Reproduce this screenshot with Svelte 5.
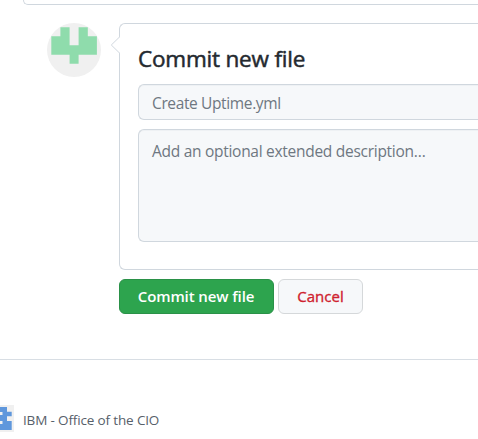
<script>
  let summary = $state('');
  let description = $state('');
</script>

<main>
  <div class="editor-edge"></div>

  <form class="commit" onsubmit={(e) => e.preventDefault()}>
    <svg class="avatar" width="54" height="54" viewBox="0 0 54 54" aria-hidden="true">
      <circle cx="27" cy="27" r="27" fill="#f0f0f0" />
      <path fill="#8fdcac" d="M4.3 13.3h9.1V4.3h9.2v18h9V4.3h9.2v9h9.1v18.4H31.6v9.1h-9v-9.1H4.3z" />
    </svg>
    <div class="column">
      <section class="box">
        <svg class="caret" width="10" height="18" viewBox="0 0 10 18" aria-hidden="true">
          <path d="M10 .5L1.3 9l8.7 8.5" fill="#fff" stroke="#d0d7de" />
        </svg>
        <h3>Commit new file</h3>
        <input type="text" placeholder="Create Uptime.yml" bind:value={summary} />
        <textarea placeholder="Add an optional extended description…" bind:value={description}></textarea>
      </section>
      <div class="actions">
        <button class="primary" type="submit"><span>Commit new file</span></button>
        <button class="danger" type="button"><span>Cancel</span></button>
      </div>
    </div>
  </form>

  <footer>
    <svg width="14" height="27" viewBox="0 0 14 27" aria-hidden="true">
      <path fill="#f0f0f0" d="M0 0h14v27H0z" />
      <path fill="#5f97dc" d="M0 2h7v4.7h4.7v4.6H7v4.6h4.7V25H0z" />
      <path fill="#f0f0f0" d="M0 7h2.5v3H0zM0 16h2.5v3H0z" />
    </svg>
    <span>IBM - Office of the CIO</span>
  </footer>
</main>

<style>
  :global(body) { background: #fff; overflow: hidden; }
  main {
    width: 478px;
    height: 439px;
    overflow: hidden;
    font-family: 'Open Sans', 'Noto Sans', sans-serif;
    color: #24292f;
  }
  main * { box-sizing: border-box; }
  .editor-edge {
    height: 5px;
    margin-left: 23px;
    border: solid #d0d7de;
    border-width: 0 0 1px 1px;
    border-bottom-left-radius: 6px;
  }
  .commit { display: flex; padding: 18px 0 0 47px; gap: 18px; }
  .avatar { flex: none; }
  .column { flex: 1; min-width: 0; }
  .box {
    position: relative;
    height: 247px;
    padding: 20px 0 0 18px;
    border: solid #d0d7de;
    border-width: 1px 0 1px 1px;
    border-radius: 6px 0 0 6px;
  }
  .caret { position: absolute; left: -10px; top: 12px; }
  h3 {
    margin: 0 0 10px;
    font-size: 22.5px;
    line-height: 30px;
    font-weight: 400;
    -webkit-text-stroke: 0.5px currentColor;
    letter-spacing: -0.2px;
    white-space: nowrap;
  }
  input, textarea {
    display: block;
    width: 100%;
    margin: 0;
    border: solid #d0d7de;
    border-width: 1px 0 1px 1px;
    border-radius: 6px 0 0 6px;
    outline: none;
    background: #f6f8fa;
    box-shadow: inset 0 1px 0 rgba(208, 215, 222, 0.2);
    font: 15.5px/22px 'Open Sans', 'Noto Sans', sans-serif;
    letter-spacing: -0.28px;
    resize: none;
  }
  input { height: 36px; padding: 7px 13px 5px; letter-spacing: -0.37px; }
  textarea { height: 113px; margin-top: 9px; padding: 10px 13px; overflow: hidden; }
  ::placeholder { color: #6e7781; opacity: 1; }
  .actions { display: flex; gap: 4px; margin-top: 9px; }
  button {
    display: flex;
    align-items: center;
    justify-content: center;
    height: 35px;
    padding: 0 0 2px;
    border: 1px solid #d5d8da;
    border-radius: 6px;
    font: 600 15px/22px 'Open Sans', 'Noto Sans', sans-serif;
    letter-spacing: -0.1px;
    white-space: nowrap;
  }
  .primary { width: 155px; padding-right: 1px; color: #fff; background: #2da44e; border-color: #2a9148; }
  .danger {
    width: 85px;
    color: #cf222e;
    background: #f6f8fa;
    font-weight: 400;
    -webkit-text-stroke: 0.35px currentColor;
    letter-spacing: 0.05px;
  }
  footer {
    display: flex;
    gap: 9px;
    margin-top: 45px;
    padding-top: 45px;
    border-top: 1px solid #d8dee4;
    font-size: 13.5px;
    line-height: 30px;
    letter-spacing: -0.15px;
    color: #57606a;
    white-space: nowrap;
  }
</style>
